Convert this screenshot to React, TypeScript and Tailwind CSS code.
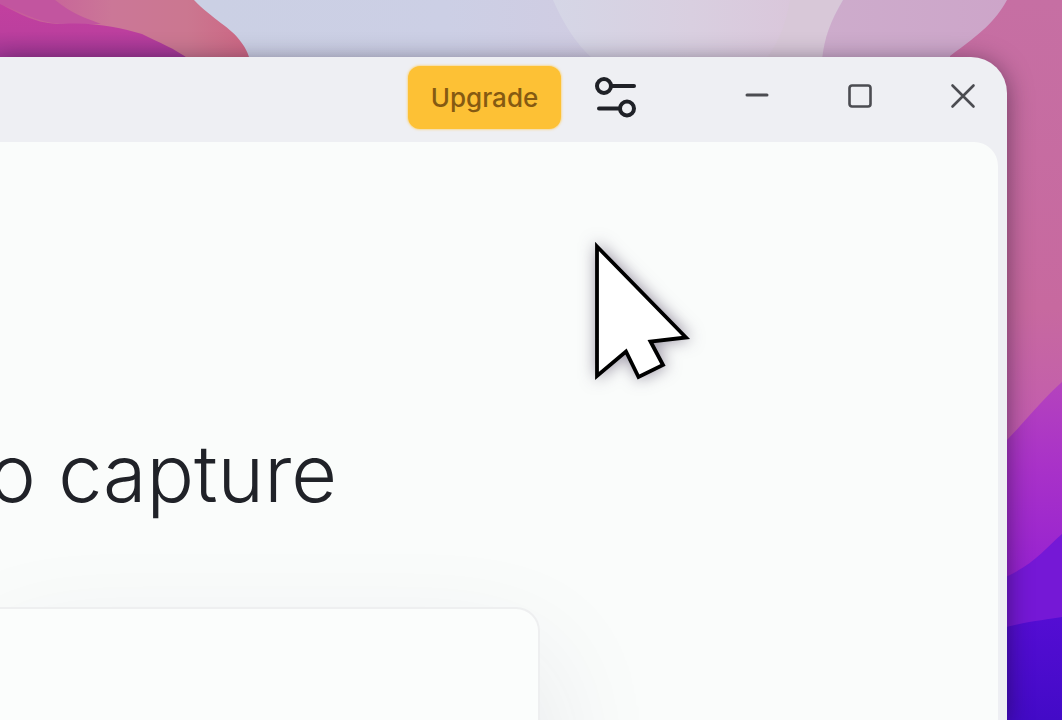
import React from 'react';

function Wallpaper() {
  return (
    <svg
      aria-hidden="true"
      className="absolute inset-0 h-full w-full"
      viewBox="0 0 1062 720"
      preserveAspectRatio="none"
    >
      <defs>
        <linearGradient id="sky" x1="0" x2="1" y1="0" y2="0">
          <stop offset="0.2" stopColor="#cbd0e4" />
          <stop offset="0.42" stopColor="#cccfe5" />
          <stop offset="0.56" stopColor="#d0cce2" />
        </linearGradient>
        <linearGradient id="mist" x1="0" x2="1" y1="0" y2="0">
          <stop offset="0" stopColor="#d5d6e6" />
          <stop offset="0.5" stopColor="#d9cfe0" />
          <stop offset="1" stopColor="#dac4d9" />
        </linearGradient>
        <linearGradient id="lilac" x1="0" x2="1" y1="0" y2="0">
          <stop offset="0" stopColor="#cdaccc" />
          <stop offset="1" stopColor="#cda5c9" />
        </linearGradient>
        <linearGradient id="coral" x1="0" x2="1" y1="0" y2="0">
          <stop offset="0" stopColor="#c5579b" />
          <stop offset="0.45" stopColor="#cb7797" />
          <stop offset="0.75" stopColor="#cb7790" />
          <stop offset="1" stopColor="#cc6683" />
        </linearGradient>
        <linearGradient id="magenta" x1="0" x2="0" y1="0" y2="1">
          <stop offset="0" stopColor="#c2409f" />
          <stop offset="0.5" stopColor="#bc3f9e" />
          <stop offset="1" stopColor="#9c3694" />
        </linearGradient>
        <linearGradient id="rose" x1="0" x2="0" y1="0" y2="1">
          <stop offset="0" stopColor="#c66fa3" />
          <stop offset="0.7" stopColor="#c7699f" />
          <stop offset="1" stopColor="#c25bb0" />
        </linearGradient>
        <linearGradient id="orchid" x1="0" x2="0" y1="0" y2="1">
          <stop offset="0" stopColor="#b443bd" />
          <stop offset="0.4" stopColor="#a932c8" />
          <stop offset="1" stopColor="#9420d2" />
        </linearGradient>
        <linearGradient id="indigo" x1="0" x2="0" y1="0" y2="1">
          <stop offset="0" stopColor="#540dd3" />
          <stop offset="1" stopColor="#430ac7" />
        </linearGradient>
      </defs>
      <rect width="1062" height="720" fill="url(#sky)" />
      <path d="M553 0C563 22 574 42 594 60H830V0Z" fill="url(#mist)" />
      <path d="M790 0C786 22 780 42 765 60H824C826 35 832 18 843 0Z" fill="#d8c8d8" />
      <path d="M843 0C831 20 824 38 822 60H1010V0Z" fill="url(#lilac)" />
      <path d="M1007 0C995 22 981 33 950 56V440H1062V0Z" fill="url(#rose)" />
      <path d="M1062 382C1045 397 1028 418 1007 440V590H1062Z" fill="url(#orchid)" />
      <path d="M1062 534C1044 550 1030 568 1000 579V640H1062Z" fill="#7518d6" />
      <path d="M1062 617C1046 620 1026 621 1000 629V720H1062Z" fill="url(#indigo)" />
      <path d="M0 0H194C212 19 232 28 241 42C247 50 248 54 250 60H0Z" fill="url(#coral)" />
      <path d="M0 0H55C72 14 88 19 101 24H60C36 22 18 10 0 4Z" fill="#c2559f" />
      <path d="M0 4C20 14 36 24 62 24C96 22 120 28 142 34C160 43 174 48 190 60H0Z" fill="url(#magenta)" />
    </svg>
  );
}

function SlidersIcon() {
  return (
    <svg width="42" height="42" viewBox="0 0 42 42" fill="none" stroke="#1f2127" strokeWidth="4" strokeLinecap="round">
      <circle cx="9" cy="9" r="7" />
      <path d="M17 9H39" />
      <circle cx="32" cy="31.5" r="7" />
      <path d="M4 31.5H24" />
    </svg>
  );
}

function MinimizeIcon() {
  return (
    <svg width="26" height="26" viewBox="0 0 26 26" fill="none" stroke="#4b4c51" strokeWidth="3" strokeLinecap="round">
      <path d="M3 12H23" />
    </svg>
  );
}

function MaximizeIcon() {
  return (
    <svg width="26" height="26" viewBox="0 0 26 26" fill="none" stroke="#4b4c51" strokeWidth="2.6">
      <rect x="2.5" y="2.5" width="21" height="21" rx="2.5" />
    </svg>
  );
}

function CloseIcon() {
  return (
    <svg width="26" height="26" viewBox="0 0 26 26" fill="none" stroke="#4b4c51" strokeWidth="2.6" strokeLinecap="round">
      <path d="M2.5 2.5L23.5 23.5M23.5 2.5L2.5 23.5" />
    </svg>
  );
}

function Pointer() {
  return (
    <svg
      aria-hidden="true"
      className="pointer-events-none absolute left-[589px] top-[236px] overflow-visible drop-shadow-[1px_0px_8px_rgba(50,35,70,0.5)]"
      width="106"
      height="148"
      viewBox="0 0 106 148"
    >
      <path
        d="M8 10.5L97 101.5L61.5 105.5L74 129L49.5 141L37 115.5L8 140Z"
        fill="#ffffff"
        stroke="#000000"
        strokeWidth="3.8"
      />
    </svg>
  );
}

const windowControls = [
  { label: 'Minimize', Icon: MinimizeIcon },
  { label: 'Maximize', Icon: MaximizeIcon },
  { label: 'Close', Icon: CloseIcon }
];

export default function App() {
  return (
    <main className="relative flex h-screen overflow-hidden pr-[55px] pt-[57px] font-['Inter',sans-serif]">
      <Wallpaper />

      {/* App window */}
      <div className="relative flex min-w-0 flex-1 flex-col rounded-tr-[36px] bg-[#eeeff3] shadow-[0_4px_24px_rgba(20,10,30,0.5)]">
        <header className="flex h-[85px] shrink-0 items-start justify-end pr-[31px] pt-[9px]">
          <button
            type="button"
            className="h-[63px] w-[153px] rounded-[12px] bg-[#fdc135] text-[26px] font-medium leading-[32px] text-[#855a12] shadow-[0_0_2px_1px_rgba(253,205,95,0.6)]"
          >
            Upgrade
          </button>
          <button type="button" aria-label="Settings" className="ml-[34px] flex h-[63px] items-center">
            <SlidersIcon />
          </button>
          <div className="ml-[107px] flex h-[60px] gap-[77px]">
            {windowControls.map(({ label, Icon }) => (
              <button key={label} type="button" aria-label={label} className="flex items-center">
                <Icon />
              </button>
            ))}
          </div>
        </header>

        {/* Content panel */}
        <section className="relative mr-[9px] flex-1 overflow-hidden rounded-tr-[24px] bg-[#fafcfb]">
          <h1 className="flex w-[337px] justify-end whitespace-nowrap pt-[291px] text-[79px] font-[350] leading-[80px] text-[#202228]">
            o capture
          </h1>
          <div className="mt-[94px] h-[420px] w-[540px] rounded-tr-[24px] border-2 border-l-0 border-[#eeeff0] bg-[#fbfdfc] shadow-[0_50px_120px_rgba(40,40,80,0.10)]" />
        </section>
      </div>

      <Pointer />
    </main>
  );
}
